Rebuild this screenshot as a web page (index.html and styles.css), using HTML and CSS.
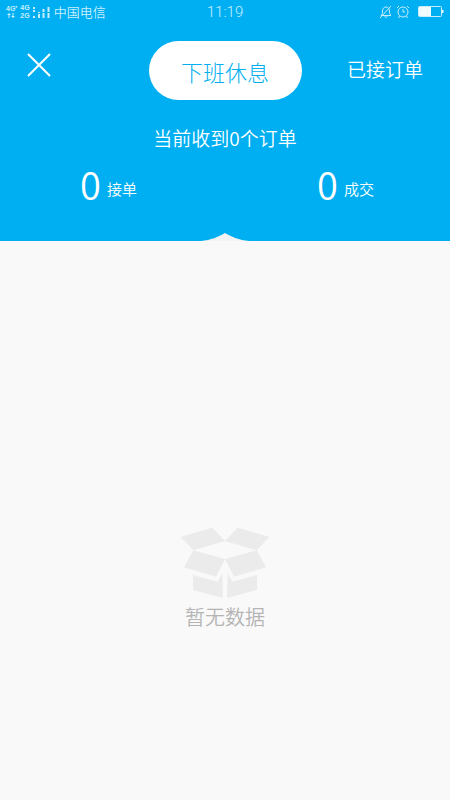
FILE: index.html
```html
<!DOCTYPE html>
<html lang="zh-CN">
<head>
<meta charset="utf-8">
<meta name="viewport" content="width=device-width, initial-scale=1">
<title>接单</title>
<link rel="stylesheet" href="styles.css">
</head>
<body>
<header class="top">
  <div class="status">
    <div class="status-left">
      <span class="net"><b>4G⁺</b>
        <svg width="10" height="6" viewBox="0 0 10 6" aria-hidden="true"><path d="M3 0v5M1.500 1.500h3M7 0v5M5.500 3.500h3" /></svg>
      </span>
      <span class="net"><b>4G</b><b>2G</b></span>
      <svg class="bars" width="18" height="13" viewBox="0 0 18 13" aria-hidden="true"><path d="M1 1v2M1 4v2M1 10v2M6 6v1M6 8v4M10.500 3v3M10.500 7v5M15.500 1v5M15.500 7v5" /></svg>
      <span class="carrier">中国电信</span>
    </div>
    <time class="clock">11:19</time>
    <div class="status-right">
      <svg width="14" height="14" viewBox="0 0 14 14" aria-hidden="true"><path d="M2 10.500h10c-1.300-1-1.500-2-1.500-4.500C10.500 3.500 9 2 7 2S3.500 3.500 3.500 6c0 2.500-.2 3.500-1.500 4.500zM5.500 11.500c.5 1 2.500 1 3 0M12 1 1 13" /></svg>
      <svg width="14" height="14" viewBox="0 0 14 14" aria-hidden="true"><circle cx="7" cy="7" r="5" /><path d="M7 4v3h2M1 3 3 1M13 3 11 1M3.500 11 2.500 13M10.500 11 11.500 13" /></svg>
      <svg class="battery" width="26" height="12" viewBox="0 0 26 12" aria-hidden="true"><rect x=".5" y=".5" width="23" height="10" rx="1" /><path class="solid" d="M1 1h12v9H1zM24 4h1.500v3H24z" /></svg>
    </div>
  </div>
  <nav class="bar">
    <button class="close" type="button" aria-label="关闭">
      <svg width="24" height="24" viewBox="0 0 24 24" aria-hidden="true"><path d="M1 1 23 23M23 1 1 23" /></svg>
    </button>
    <button class="toggle" type="button">下班休息</button>
    <a class="orders" href="#orders">已接订单</a>
  </nav>
  <h1 class="summary">当前收到0个订单</h1>
  <div class="stats">
    <p class="stat"><strong>0</strong><span>接单</span></p>
    <p class="stat"><strong>0</strong><span>成交</span></p>
  </div>
  <svg class="notch" width="56" height="8" viewBox="0 0 56 8" aria-hidden="true"><path d="M4 8C14 7 21 4 28 0c7 4 14 7 24 8z" /></svg>
</header>
<main class="empty">
  <svg width="90" height="72" viewBox="30 35 270 216" aria-hidden="true">
    <path d="M32 65 127 37 165 77 70 105zM298 65 203 37 165 77 260 105zM70 105 165 131 138 184 42 156zM260 105 165 131 192 184 288 156zM69 179 143 199 157 174 159 248 69 224zM261 179 187 199 173 174 171 248 261 224z" />
  </svg>
  <p>暂无数据</p>
</main>
</body>
</html>
```
FILE: styles.css
```css
* {
  box-sizing: border-box;
}

body {
  margin: 0;
  min-height: 100vh;
  display: flex;
  flex-direction: column;
  background: #f9f9f9;
  font-family: "Noto Sans CJK SC", sans-serif;
  font-weight: 350;
}

h1,
p {
  margin: 0;
  font-weight: inherit;
}

button {
  border: 0;
  padding: 0;
  font: inherit;
  cursor: pointer;
}

svg {
  display: block;
}

.top {
  position: relative;
  padding-bottom: 23px;
  background: #00aff2;
  color: #fff;
}

.status {
  display: grid;
  grid-template-columns: 1fr auto 1fr;
  align-items: center;
  height: 24px;
  padding: 0 6px;
  color: #c8eefc;
}

.status svg {
  fill: none;
  stroke: #c8eefc;
  stroke-width: 1;
}

.status .solid {
  fill: #f0fbff;
  stroke: none;
}

.status-left,
.status-right {
  display: flex;
  align-items: center;
  gap: 3px;
}

.status-right {
  justify-content: flex-end;
}

.net {
  display: flex;
  flex-direction: column;
  font: 7px/8px "Liberation Sans", sans-serif;
}

.status .bars {
  stroke-width: 2;
}

.battery {
  margin-left: 5px;
}

.carrier {
  font-size: 13px;
  line-height: 24px;
}

.clock {
  font-family: Roboto, sans-serif;
  font-weight: 300;
  font-size: 15px;
  line-height: 24px;
}

.bar {
  display: grid;
  grid-template-columns: 1fr auto 1fr;
  padding: 17px 27px 0;
}

.close {
  justify-self: start;
  align-self: start;
  margin-top: 12px;
  background: none;
}

.close svg {
  fill: none;
  stroke: #fff;
  stroke-width: 2;
}

.toggle {
  width: 153px;
  height: 59px;
  border-radius: 30px;
  background: #fff;
  color: #00aff2;
  font-size: 22px;
  font-weight: 300;
}

.orders {
  justify-self: end;
  color: #fff;
  font-size: 19px;
  line-height: 56px;
  text-decoration: none;
}

.summary {
  margin-top: 24px;
  font-size: 19px;
  line-height: 28px;
  text-align: center;
}

.stats {
  display: flex;
  justify-content: space-between;
  padding: 8px 76px 0 80px;
}

.stat {
  display: flex;
  align-items: flex-start;
  gap: 6px;
  font-size: 15px;
  line-height: 58px;
}

.stat strong {
  font-size: 38px;
  line-height: 48px;
  font-weight: inherit;
}

.notch {
  position: absolute;
  bottom: 0;
  left: calc(50% - 28px);
  fill: #f3f3f3;
}

.empty {
  flex: 1;
  display: flex;
  flex-direction: column;
  align-items: center;
  padding-top: 286px;
  color: #b4b4b4;
  font-size: 20px;
  line-height: 36px;
}

.empty svg {
  fill: #ebebeb;
}
```
